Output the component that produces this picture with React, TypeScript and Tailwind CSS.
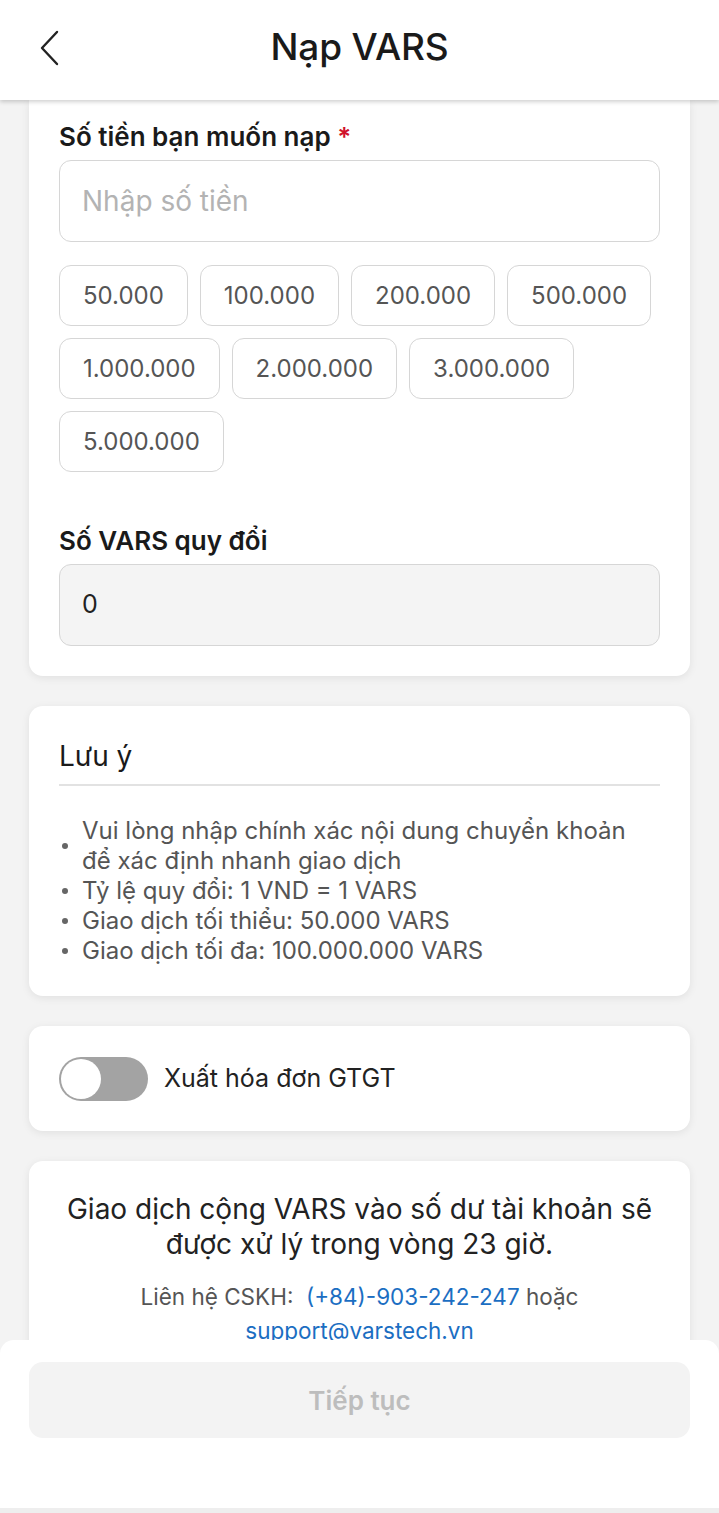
const amounts = [
  ["50.000", "100.000", "200.000", "500.000"],
  ["1.000.000", "2.000.000", "3.000.000"],
  ["5.000.000"],
];

const notes = [
  "Vui lòng nhập chính xác nội dung chuyển khoản để xác định nhanh giao dịch",
  "Tỷ lệ quy đổi: 1 VND = 1 VARS",
  "Giao dịch tối thiểu: 50.000 VARS",
  "Giao dịch tối đa: 100.000.000 VARS",
];

export default function App() {
  return (
    <div
      className="relative w-[719px] h-[1513px] overflow-hidden bg-[#f3f3f3] text-[#1a1a1a]"
      style={{ fontFamily: "Inter, 'Noto Sans', sans-serif" }}
    >
      {/* Header */}
      <header className="relative z-10 h-[100px] bg-white flex items-center justify-center shadow-[0_2px_4px_rgba(0,0,0,0.18)]">
        <button className="absolute left-[36px] top-[28px] text-[#222]">
          <svg width="28" height="40" viewBox="0 0 28 40" fill="none">
            <path d="M21 4 L6 20 L21 36" stroke="currentColor" strokeWidth="2.4" strokeLinecap="round" strokeLinejoin="round" />
          </svg>
        </button>
        <h1 className="text-[37px] font-medium tracking-[-0.2px] -mt-[6px]">Nạp VARS</h1>
      </header>

      <main className="px-[29px] flex flex-col gap-[30px]">
        {/* Amount card */}
        <section className="bg-white rounded-b-[14px] px-[30px] pt-[22px] pb-[30px] shadow-[0_2px_8px_rgba(0,0,0,0.08)]">
          <label className="block text-[26px] font-semibold leading-[30px] mb-[8px]">
            Số tiền bạn muốn nạp <span className="text-[#d0112b]">*</span>
          </label>
          <div className="h-[82px] rounded-[12px] border border-[#d6d6d6] flex items-center px-[22px] text-[28px] text-[#b3b3b3]">
            Nhập số tiền
          </div>

          <div className="mt-[23px] flex flex-col gap-[12px]">
            {amounts.map((row, i) => (
              <div key={i} className="flex gap-[12px]">
                {row.map((a) => (
                  <button
                    key={a}
                    className="h-[61px] px-[23px] rounded-[12px] border border-[#d6d6d6] text-[24px] text-[#555]"
                  >
                    {a}
                  </button>
                ))}
              </div>
            ))}
          </div>

          <label className="block mt-[54px] text-[26px] font-semibold leading-[30px] mb-[8px]">
            Số VARS quy đổi
          </label>
          <div className="h-[82px] rounded-[12px] border border-[#d6d6d6] bg-[#f4f4f4] flex items-center px-[22px] text-[25px] text-[#222]">
            0
          </div>
        </section>

        {/* Note card */}
        <section className="bg-white rounded-[14px] px-[30px] pt-[32px] pb-[30px] shadow-[0_2px_8px_rgba(0,0,0,0.08)]">
          <h2 className="text-[28px] leading-[36px] pb-[10px] border-b-2 border-[#e2e2e2]">Lưu ý</h2>
          <ul className="mt-[30px] flex flex-col text-[24px] leading-[30px] text-[#555]">
            {notes.map((n) => (
              <li key={n} className="flex items-center gap-[14px]">
                <span className="w-[6px] h-[6px] rounded-full bg-[#666] shrink-0 ml-[3px]" />
                <span className="pr-[20px]">{n}</span>
              </li>
            ))}
          </ul>
        </section>

        {/* VAT toggle */}
        <section className="bg-white rounded-[14px] px-[30px] h-[105px] flex items-center gap-[16px] shadow-[0_2px_8px_rgba(0,0,0,0.08)]">
          <div className="w-[89px] h-[44px] rounded-full bg-[#a3a3a3] p-[2px] flex items-center">
            <div className="w-[40px] h-[40px] rounded-full bg-white" />
          </div>
          <span className="text-[25px] text-[#222]">Xuất hóa đơn GTGT</span>
        </section>

        {/* Info card */}
        <section className="bg-white rounded-[14px] px-[24px] pt-[31px] pb-[40px] text-center shadow-[0_2px_8px_rgba(0,0,0,0.08)]">
          <p className="text-[28px] leading-[35px] text-[#222]">
            Giao dịch cộng VARS vào số dư tài khoản sẽ được xử lý trong vòng 23 giờ.
          </p>
          <p className="mt-[18px] text-[22.5px] leading-[34px] text-[#555] px-[40px]">
            Liên hệ CSKH:&nbsp;{" "}
            <span className="text-[#1b6ec2]">(+84)-903-242-247</span> hoặc{" "}
            <span className="text-[#1b6ec2]">support@varstech.vn</span>
          </p>
        </section>
      </main>

      {/* Bottom bar */}
      <footer className="absolute left-0 right-0 bottom-0 h-[173px] bg-white rounded-t-[14px] border-b-[5px] border-[#eeeeee] px-[29px] pt-[22px]">
        <button className="w-full h-[76px] rounded-[14px] bg-[#f3f3f3] text-[26px] font-semibold text-[#bdbdbd]">
          Tiếp tục
        </button>
      </footer>
    </div>
  );
}
